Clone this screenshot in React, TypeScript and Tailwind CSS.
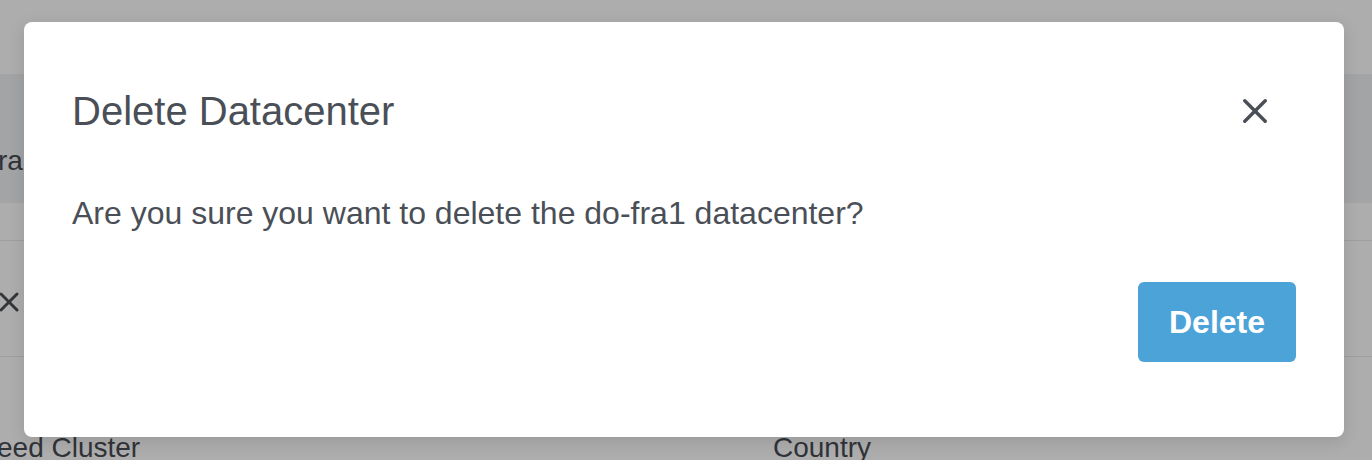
export default function App() {
  return (
    <div className="relative h-[460px] w-[1372px] overflow-hidden bg-[#adadad] font-['Liberation_Sans',Arial,sans-serif] text-[#303338]">
      {/* page behind the overlay */}
      <div className="h-[74px] bg-[#adadad]" />
      <div className="flex h-[129px] items-end bg-[#a3a4a5] pb-[28px]">
        <span className="-ml-[2px] text-[28px] leading-none">ra</span>
      </div>
      <div className="h-[38px] border-b border-[#9f9f9f]" />
      <div className="flex h-[116px] items-center border-b border-[#9f9f9f]">
        <svg width="20" height="20" viewBox="0 0 20 20" className="-ml-[1px] mt-[6px]" fill="none" stroke="#33363a" strokeWidth="3" strokeLinecap="round">
          <line x1="2" y1="2" x2="18" y2="18" />
          <line x1="18" y1="2" x2="2" y2="18" />
        </svg>
      </div>
      <div className="flex pt-[77px] text-[28px] leading-none">
        <span className="-ml-[3px] w-[776px]">eed Cluster</span>
        <span>Country</span>
      </div>

      {/* modal */}
      <div className="absolute inset-0 px-[24px] pt-[22px]">
        <div className="h-[415px] w-[1320px] rounded-[8px] bg-white px-[48px] pt-[69px] text-[#4a4f57] shadow-[0_4px_16px_rgba(0,0,0,0.12)]">
          <div className="flex items-center justify-between">
            <h2 className="text-[40px] leading-[40px] font-normal">Delete Datacenter</h2>
            <button className="mr-[29px] flex h-[24px] w-[24px] items-center justify-center">
              <svg width="24" height="24" viewBox="0 0 24 24" fill="none" stroke="#4a4f57" strokeWidth="3.4" strokeLinecap="round">
                <line x1="1.8" y1="1.8" x2="22.2" y2="22.2" />
                <line x1="22.2" y1="1.8" x2="1.8" y2="22.2" />
              </svg>
            </button>
          </div>
          <p className="mt-[66px] text-[32px] leading-[32px]">
            Are you sure you want to delete the do-fra1 datacenter?
          </p>
          <div className="mt-[53px] flex justify-end">
            <button className="h-[80px] w-[158px] rounded-[6px] bg-[#4ca3d7] text-[32px] font-bold text-white">
              Delete
            </button>
          </div>
        </div>
      </div>
    </div>
  );
}
